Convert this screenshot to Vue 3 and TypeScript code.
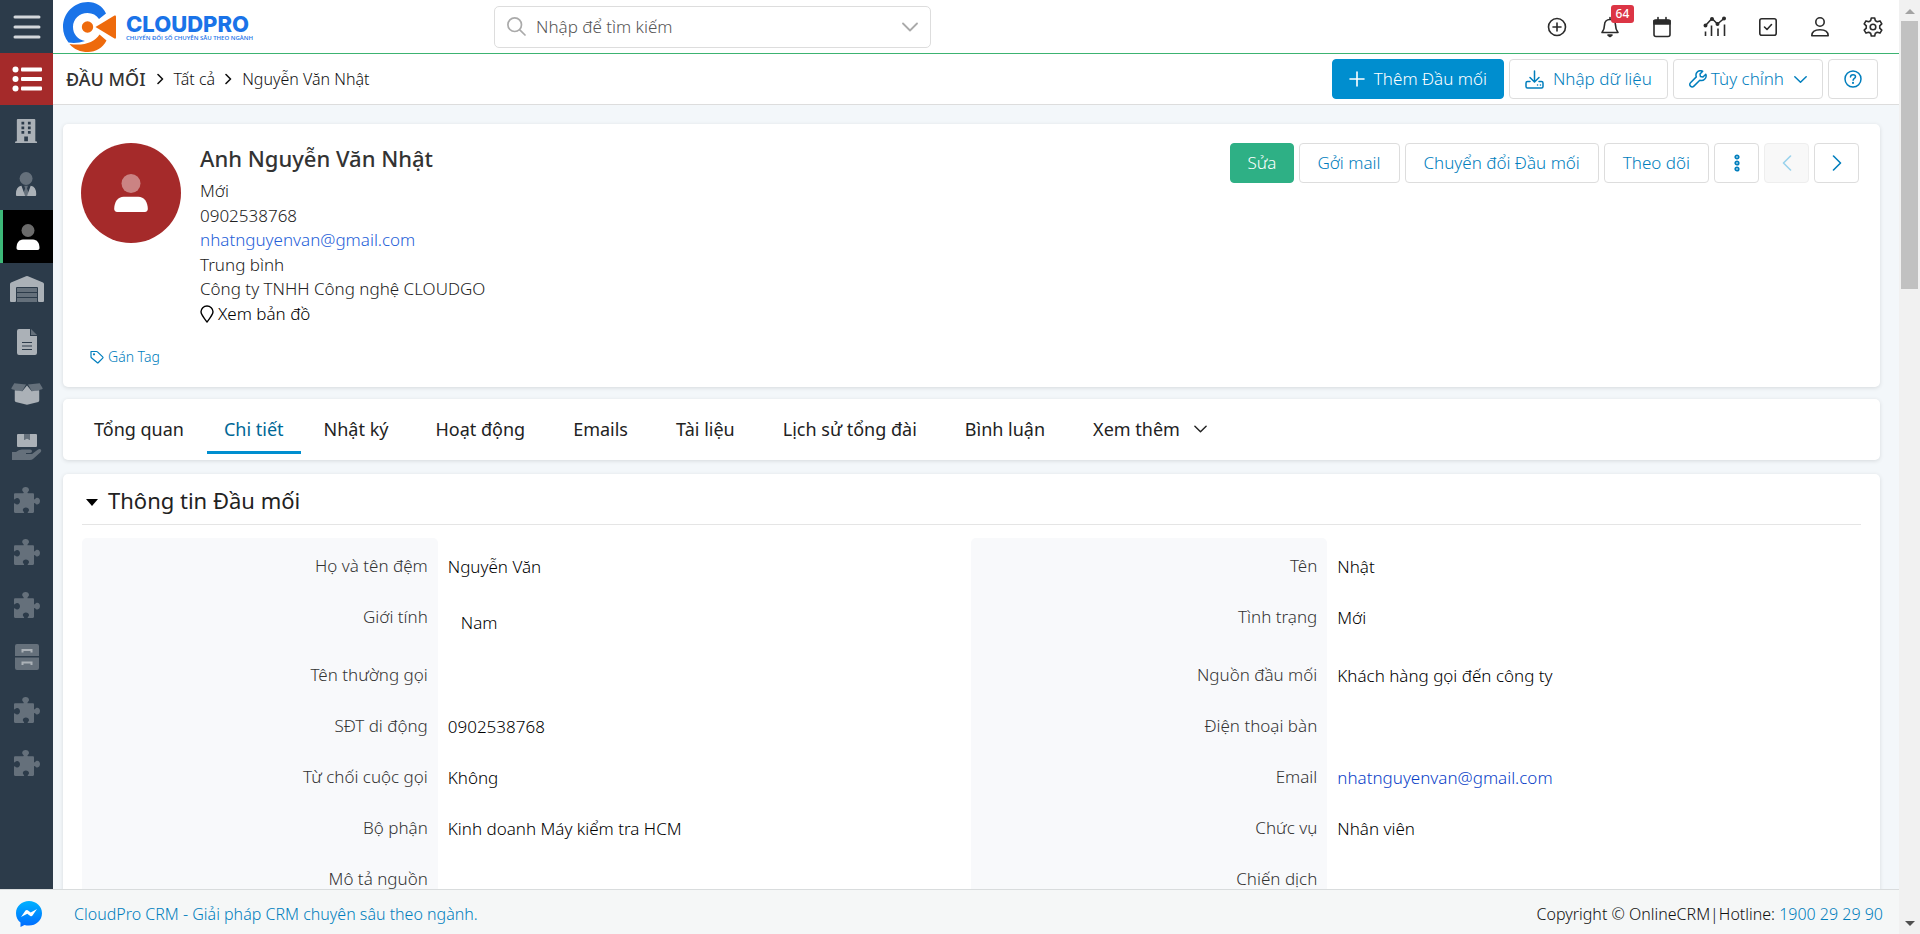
<script setup lang="ts">
interface Field { label: string; value?: string; email?: boolean; boxed?: boolean }

const modules = [
  { id: 'building', name: 'Công ty' },
  { id: 'usertie', name: 'Người liên hệ' },
  { id: 'user', name: 'Đầu mối', active: true },
  { id: 'warehouse', name: 'Kho' },
  { id: 'file', name: 'Báo giá' },
  { id: 'box', name: 'Sản phẩm' },
  { id: 'hand', name: 'Giao hàng' },
  { id: 'puzzle', name: 'Tiện ích 1' },
  { id: 'puzzle', name: 'Tiện ích 2' },
  { id: 'puzzle', name: 'Tiện ích 3' },
  { id: 'cabinet', name: 'Lưu trữ' },
  { id: 'puzzle', name: 'Tiện ích 4' },
  { id: 'puzzle', name: 'Tiện ích 5' },
]

const mainTabs = ['Tổng quan', 'Chi tiết', 'Nhật ký']
const relatedTabs = ['Hoạt động', 'Emails', 'Tài liệu', 'Lịch sử tổng đài', 'Bình luận']

const rows: [Field, Field][] = [
  [{ label: 'Họ và tên đệm', value: 'Nguyễn Văn' }, { label: 'Tên', value: 'Nhật' }],
  [{ label: 'Giới tính', value: 'Nam', boxed: true }, { label: 'Tình trạng', value: 'Mới' }],
  [{ label: 'Tên thường gọi' }, { label: 'Nguồn đầu mối', value: 'Khách hàng gọi đến công ty' }],
  [{ label: 'SĐT di động', value: '0902538768' }, { label: 'Điện thoại bàn' }],
  [{ label: 'Từ chối cuộc gọi', value: 'Không' }, { label: 'Email', value: 'nhatnguyenvan@gmail.com', email: true }],
  [{ label: 'Bộ phận', value: 'Kinh doanh Máy kiểm tra HCM' }, { label: 'Chức vụ', value: 'Nhân viên' }],
  [{ label: 'Mô tả nguồn' }, { label: 'Chiến dịch' }],
]
</script>

<template>
  <div class="shell">
    <svg class="sprite" aria-hidden="true">
      <symbol id="i-building" viewBox="0 0 26 26"><path fill-rule="evenodd" d="M3 0h18q1 0 1 1v23h1q1 0 1 2H0q0-2 1-2h1V1q0-1 1-1zM7 3v3h3V3zM14 3v3h3V3zM7 8v3h3V8zM14 8v3h3V8zM7 13v3h3v-3zM14 13v3h3v-3zM10 19v5h4v-5z" /></symbol>
      <symbol id="i-usertie" viewBox="0 0 26 26"><circle cx="12" cy="7" r="7" opacity=".45" /><path opacity=".45" d="M10 15h4l-1 3 2 5-2 3h-2l-2-3 2-5z" /><path d="M7 15 11 26H2q-1 0-1-2 0-8 6-9zM17 15l-4 11h9q1 0 1-2 0-8-6-9z" /></symbol>
      <symbol id="i-user" viewBox="0 0 26 26"><circle cx="13" cy="6.500" r="6.500" opacity=".42" /><path d="M8 15.500h10c4 0 6.500 3.500 6.500 8.500 0 1-.7 2-2 2H3.500c-1.300 0-2-1-2-2 0-5 2.500-8.500 6.500-8.500z" /></symbol>
      <symbol id="i-warehouse" viewBox="0 0 34 26"><path opacity=".45" d="M7 12h20v4H7zM7 17h20v4H7zM7 22h20v4H7z" /><path d="M1 6.500 16 .3q1-.4 2 0L33 6.500q1 .5 1 1.500v17q0 1-1 1h-4q-1 0-1-1V12q0-1-1-1H7q-1 0-1 1v13q0 1-1 1H1q-1 0-1-1V8q0-1 1-1.500z" /></symbol>
      <symbol id="i-file" viewBox="0 0 20 26"><path fill-rule="evenodd" d="M2 0h11v7h7v17q0 2-2 2H2q-2 0-2-2V2q0-2 2-2zM5 13v1h10v-1zM5 16.500v1h10v-1zM5 20v1h10v-1z" /><path opacity=".45" d="m14 0 6 6h-6z" /></symbol>
      <symbol id="i-box" viewBox="0 0 34 24"><path d="M17 3 12 9 4 8v11q0 1 1 1.500l12 3 12-3q1-.5 1-1.500V8l-8 1z" /><path opacity=".45" d="M3.500.5 16 2l-4.500 7.500L1 7Q0 6.500.500 5.500zM30.500.5 18 2l4.500 7.500L33 7q1-.5.500-1.500z" /></symbol>
      <symbol id="i-hand" viewBox="0 0 30 26"><path d="M6 0h6v6l3-1.500L18 6V0h6q1 0 1 1v11q0 1-1 1H6q-1 0-1-1V1q0-1 1-1z" /><path opacity=".45" d="M12 0h6v6l-3-1.500L12 6zM0 18h4q3-3 7-2.500h7q2 0 2 1.700t-2 1.800h-4v1h6l6-4.500q2-1 3 .300.800 1.200-.5 2.500L21 25q-1 1-3 1H0z" /></symbol>
      <symbol id="i-puzzle" viewBox="0 0 26 26"><path opacity=".45" d="M1.200 6.300h8c.6 0 .8-.6.300-1.100C8.700 4.500 8.200 3.800 8.200 2.800 8.200 1.200 9.700 0 11.600 0s3.400 1.200 3.400 2.800c0 1-.5 1.700-1.300 2.400-.5.500-.3 1.100.3 1.100h4.800c.7 0 1.200.5 1.200 1.200v4.300c0 .6.600.8 1.100.3.600-.8 1.300-1.300 2.300-1.300 1.500 0 2.600 1.500 2.600 3.300s-1.100 3.400-2.600 3.400c-1 0-1.700-.5-2.300-1.300-.5-.5-1.100-.3-1.100.3v8.300c0 .7-.5 1.200-1.200 1.200h-4.600c-.6 0-.8-.6-.3-1.100.8-.6 1.100-1.100 1.100-1.900 0-1.400-1.400-2.400-3.100-2.400s-3.100 1-3.100 2.400c0 .8.400 1.300 1.100 1.900.5.500.3 1.100-.3 1.100H1.200C.5 26 0 25.500 0 24.800v-8c0-.6.600-.8 1.100-.3.500.7 1.200 1.100 2.100 1.100 1.600 0 2.800-1.500 2.800-3.300s-1.200-3.300-2.800-3.300c-.9 0-1.600.4-2.100 1.100-.5.500-1.100.3-1.100-.3V7.500c0-.7.5-1.200 1.200-1.200z" /></symbol>
      <symbol id="i-cabinet" viewBox="0 0 24 26"><path opacity=".45" d="M2 0h20q2 0 2 2v10H0V2q0-2 2-2zM0 13.500h24V24q0 2-2 2H2q-2 0-2-2z" /><path d="M6.500 5h11v3.500h-2V7h-7v1.500h-2zM6.500 17.500h11V21h-2v-1.500h-7V21h-2z" /></symbol>
      <symbol id="i-chev-d" viewBox="0 0 16 10"><path d="m1 1.500 7 7 7-7" fill="none" stroke="currentColor" stroke-width="1.800" stroke-linecap="round" stroke-linejoin="round" /></symbol>
      <symbol id="i-chev-r" viewBox="0 0 10 16"><path d="m1.500 1 7 7-7 7" fill="none" stroke="currentColor" stroke-width="1.600" stroke-linecap="round" stroke-linejoin="round" /></symbol>
      <symbol id="i-crumb" viewBox="0 0 7 12"><path d="m1 1.500 4.500 4.500L1 10.500" fill="none" stroke="currentColor" stroke-width="1.600" stroke-linecap="round" stroke-linejoin="round" /></symbol>
    </svg>

    <aside class="sidebar">
      <button class="burger" aria-label="Menu"><svg width="28" height="24" viewBox="0 0 28 24"><path d="M2 2h24M2 12h24M2 22h24" stroke="#d3d7db" stroke-width="3" stroke-linecap="round" /></svg></button>
      <a href="#" class="current" aria-label="Danh sách"><svg width="30" height="26" viewBox="0 0 30 26" fill="#fff"><circle cx="3.500" cy="3.500" r="3" /><circle cx="3.500" cy="13" r="3" /><circle cx="3.500" cy="22.500" r="3" /><rect x="9" y="1.500" width="21" height="4" rx="1" /><rect x="9" y="11" width="21" height="4" rx="1" /><rect x="9" y="20.500" width="21" height="4" rx="1" /></svg></a>
      <nav class="modules">
        <a v-for="(m, i) in modules" :key="i" href="#" :class="['module', { active: m.active }]" :aria-label="m.name">
          <svg :class="['mi', 'mi-' + m.id]"><use :href="'#i-' + m.id" /></svg>
        </a>
      </nav>
    </aside>

    <header class="topbar">
      <a href="#" class="logo" aria-label="CloudPro">
        <svg width="54" height="52" viewBox="0 0 54 52">
          <path fill="#1a73e8" d="M43 12.500C39.500 5 33 1 25 1 11 1 0 12 0 26c0 6 2 11 5.500 15.500 5 .8 11 .5 16.500-1.500C14.500 38.500 10 33 10 26c0-8 6.500-14 14.500-14 5 0 9 2 11.500 6z" />
          <path fill="#ee6a0c" d="M6.500 43C11 48.500 17.500 51 25 51c8 0 14.500-4 18.500-11.500L36.500 33.500C31.500 41.500 21 45 6.500 43z" />
          <circle cx="24.500" cy="26" r="5.700" fill="#ee6a0c" />
          <path fill="#ee6a0c" d="M32.500 26 51.500 14.500q1.500-.5 1.500 1v21q0 1.500-1.500 1z" />
        </svg>
        <span class="brand"><strong>CLOUDPRO</strong><small>CHUYỂN ĐỔI SỐ CHUYÊN SÂU THEO NGÀNH</small></span>
      </a>
      <label class="search">
        <svg width="19" height="19" viewBox="0 0 19 19" fill="none" stroke="#aaa" stroke-width="1.700" stroke-linecap="round"><circle cx="7.700" cy="7.700" r="6.800" /><path d="m12.800 12.800 5.200 5.200" /></svg>
        <input type="text" placeholder="Nhập để tìm kiếm" aria-label="Tìm kiếm" />
        <svg class="search-chev" width="16" height="10"><use href="#i-chev-d" /></svg>
      </label>
      <div class="tools">
        <button aria-label="Tạo nhanh"><svg width="22" height="22" viewBox="0 0 22 22"><circle cx="11" cy="11" r="8.500" /><path d="M11 7v8M7 11h8" /></svg></button>
        <button aria-label="Thông báo"><svg width="22" height="22" viewBox="0 0 22 22"><path d="M11 1.500v2M11 3.500c-3.500 0-5.500 2.500-5.500 5.500 0 4-1 5.500-2.500 7.500h16c-1.500-2-2.500-3.500-2.500-7.500 0-3-2-5.500-5.500-5.500z" /><path d="M9 19h4l-2 1.500z" fill="currentColor" /></svg><span class="badge">64</span></button>
        <button aria-label="Lịch"><svg width="22" height="22" viewBox="0 0 22 22"><rect x="3" y="4" width="16" height="16.500" rx="2" /><path d="M3 4.500h16V8H3z" fill="currentColor" /><path d="M7 1.500V4M15 1.500V4" /></svg></button>
        <button aria-label="Báo cáo"><svg width="24" height="22" viewBox="0 0 24 22"><path d="M2.500 9.500 9 2.500l5.500 5.500L21.500 2" /><path d="M2.500 15.500V20M8.500 9.500V20M15 12.500V20M21.500 8.500V20" stroke-linecap="butt" /><circle cx="2.500" cy="9.500" r="1.200" fill="currentColor" /><circle cx="9" cy="3" r="1.200" fill="currentColor" /><circle cx="14.500" cy="8" r="1.200" fill="currentColor" /><circle cx="21" cy="2.500" r="1.200" fill="currentColor" /></svg></button>
        <button aria-label="Công việc"><svg width="22" height="22" viewBox="0 0 22 22"><rect x="2.800" y="2.800" width="16.400" height="16.400" rx="2" /><path d="m7.500 11 2.500 2.500 4.500-5" /></svg></button>
        <button aria-label="Tài khoản"><svg width="22" height="22" viewBox="0 0 22 22"><circle cx="11" cy="6" r="4.200" /><path d="M2.800 19.800c0-3.500 2.700-6 8.200-6s8.200 2.500 8.200 6z" /></svg></button>
        <button aria-label="Cài đặt"><svg width="22" height="22" viewBox="0 0 22 22"><circle cx="11" cy="11" r="2.800" /><path d="M9.300 2h3.400l.6 2.700q1.200.4 2 1.100l2.700-.9 1.800 3-2.100 1.900q.2 1.200 0 2.400l2.100 1.900-1.800 3-2.700-.9q-.8.700-2 1.100L12.700 20H9.300l-.6-2.700q-1.200-.4-2-1.100l-2.700.9-1.800-3 2.100-1.900q-.2-1.200 0-2.400L2.200 7.900l1.800-3 2.700.9q.8-.7 2-1.100z" /></svg></button>
      </div>
    </header>

    <div class="crumbs">
      <nav class="path" aria-label="Breadcrumb">
        <a href="#" class="root">ĐẦU MỐI</a><svg width="7" height="12"><use href="#i-crumb" /></svg>
        <a href="#">Tất cả</a><svg width="7" height="12"><use href="#i-crumb" /></svg>
        <span>Nguyễn Văn Nhật</span>
      </nav>
      <div class="btns">
        <button class="btn primary"><svg width="16" height="16" viewBox="0 0 16 16" fill="none" stroke="#fff" stroke-width="1.600" stroke-linecap="round"><path d="M8 1v14M1 8h14" /></svg>Thêm Đầu mối</button>
        <button class="btn"><svg width="19" height="19" viewBox="0 0 19 19" fill="none" stroke="currentColor" stroke-width="1.500" stroke-linecap="round" stroke-linejoin="round"><path d="M9.500 1v10.500M5 7.500l4.500 4.500L14 7.500M5 11.500H2.500q-1.500 0-1.500 1.500v3.500q0 1.500 1.500 1.500h14q1.500 0 1.500-1.500V13q0-1.500-1.500-1.500H14" /><path d="M12.500 15h.1M15.400 15h.1" /></svg>Nhập dữ liệu</button>
        <button class="btn tight"><svg width="18" height="18" viewBox="0 0 18 18" fill="none" stroke="currentColor" stroke-width="1.500" stroke-linejoin="round"><path d="M16.800 4.300 14 7l-2.600-.5L11 4l2.700-2.800C11.500.3 9.500.7 8.200 2.100 6.900 3.400 6.700 5.200 7.300 6.900L1.500 12.700c-1 1-1 2.500 0 3.400 1 1 2.400 1 3.400 0l5.900-5.800c1.800.6 3.500.3 4.800-1 1.400-1.300 1.900-3.200 1.200-5z" /></svg>Tùy chỉnh<svg class="caret" width="13" height="9"><use href="#i-chev-d" /></svg></button>
        <button class="btn" aria-label="Trợ giúp"><svg width="18" height="18" viewBox="0 0 18 18" fill="none" stroke="currentColor" stroke-width="1.500" stroke-linecap="round"><circle cx="9" cy="9" r="8" /><path d="M6.500 7c0-1.500 1-2.300 2.500-2.300s2.500.8 2.500 2.100c0 1.600-2.400 1.600-2.400 3.400" /><path d="M9 12.800v.2" stroke-width="2" /></svg></button>
      </div>
    </div>

    <main class="content">
      <section class="card profile">
        <div class="avatar"><svg class="mi-user-lg"><use href="#i-user" /></svg></div>
        <div class="info">
          <h1>Anh Nguyễn Văn Nhật</h1>
          <div class="lines">
            <span>Mới</span>
            <span>0902538768</span>
            <a href="#" class="mail">nhatnguyenvan@gmail.com</a>
            <span>Trung bình</span>
            <span>Công ty TNHH Công nghệ CLOUDGO</span>
            <a href="#" class="map"><svg width="14" height="18" viewBox="0 0 14 18" fill="none" stroke="currentColor" stroke-width="1.400" stroke-linejoin="round"><path d="M7 17C3.500 12.500 1 9.500 1 6.800 1 3.500 3.700 1 7 1s6 2.500 6 5.800C13 9.500 10.500 12.500 7 17z" /></svg>Xem bản đồ</a>
          </div>
        </div>
        <div class="btns">
          <button class="btn success">Sửa</button>
          <button class="btn">Gởi mail</button>
          <button class="btn">Chuyển đổi Đầu mối</button>
          <button class="btn">Theo dõi</button>
          <button class="btn icon" aria-label="Thêm thao tác"><svg width="6" height="18" viewBox="0 0 6 18" fill="none" stroke="currentColor" stroke-width="1.800"><circle cx="3" cy="3" r="1.700" /><circle cx="3" cy="9" r="1.700" /><circle cx="3" cy="15" r="1.700" /></svg></button>
          <button class="btn icon" disabled aria-label="Trước"><svg class="flip" width="10" height="16"><use href="#i-chev-r" /></svg></button>
          <button class="btn icon" aria-label="Sau"><svg width="10" height="16"><use href="#i-chev-r" /></svg></button>
        </div>
        <a href="#" class="tag"><svg width="14" height="14" viewBox="0 0 14 14" fill="none" stroke="currentColor" stroke-width="1.200" stroke-linejoin="round"><path d="M1 1.500h5.500q.5 0 1 .4l5.200 5q.7.600 0 1.300l-4.300 4.300q-.7.700-1.300 0L1.400 7.800Q1 7.300 1 6.800z" /><circle cx="4" cy="4.300" r=".5" /></svg>Gán Tag</a>
      </section>

      <nav class="card tabs">
        <a v-for="t in mainTabs" :key="t" href="#" :class="['tab', { on: t === 'Chi tiết' }]">{{ t }}</a>
        <a v-for="t in relatedTabs" :key="t" href="#" class="tab related">{{ t }}</a>
        <button class="tab related more">Xem thêm<svg width="13" height="8"><use href="#i-chev-d" /></svg></button>
      </nav>

      <section class="card details">
        <h2><button class="toggle" aria-label="Thu gọn"></button>Thông tin Đầu mối</h2>
        <table>
          <tbody>
            <tr v-for="(row, r) in rows" :key="r">
              <template v-for="f in row" :key="f.label">
                <th scope="row">{{ f.label }}</th>
                <td :class="{ boxed: f.boxed }"><a v-if="f.email" href="#" class="mail">{{ f.value }}</a><template v-else>{{ f.value }}</template></td>
              </template>
            </tr>
          </tbody>
        </table>
      </section>
    </main>

    <footer class="footer">
      <a href="#" class="messenger" aria-label="Messenger"><svg width="26" height="26" viewBox="0 0 26 26"><defs><linearGradient id="mg" x1="0" y1="0" x2="0" y2="1"><stop offset="0" stop-color="#00b2ff" /><stop offset="1" stop-color="#006aff" /></linearGradient></defs><path fill="url(#mg)" d="M13 0C20 0 26 5 26 12.200S20 24.500 13 24.500c-2 0-3-.3-4.500-.6L4.500 26V21.500C1.500 19.500 0 16 0 12.200 0 5 6 0 13 0z" /><path fill="#fff" d="m5 16 4.500-6.500q1-1 2.200-.3l3 2.200L21 8l-4.500 6.600q-1 1.200-2.200.3l-3-2.200z" /></svg></a>
      <a href="#">CloudPro CRM - Giải pháp CRM chuyên sâu theo ngành.</a>
      <p>Copyright © OnlineCRM|Hotline: <a href="#">1900 29 29 90</a></p>
    </footer>

    <div class="scroll" aria-hidden="true"><i class="up"></i><i class="thumb"></i><i class="down"></i></div>
  </div>
</template>

<style>
html, body { margin: 0; }
</style>

<style scoped>
* { box-sizing: border-box; }
.shell {
  display: grid;
  grid-template: 54px 51px minmax(0, 1fr) 45px / 53px minmax(0, 1fr) 21px;
  height: 100vh;
  overflow: hidden;
  background: #f3f7fa;
  color: #333;
  font: 300 17px/24px "Noto Sans", "Open Sans", sans-serif;
}
.sprite { position: absolute; width: 0; height: 0; }
a { color: inherit; text-decoration: none; }
button { font: inherit; color: inherit; background: none; border: 0; padding: 0; cursor: pointer; }
svg { flex: none; display: block; }

.sidebar { grid-area: 1 / 1 / 4 / 2; background: #2c3b4a; display: flex; flex-direction: column; }
.burger, .current { display: flex; align-items: center; justify-content: center; height: 53px; flex: none; }
.current { height: 52px; background: #a52a2a; }
.burger { width: 100%; }
.modules { display: grid; grid-auto-rows: 1fr; height: 684px; flex: none; }
.module { display: flex; align-items: center; justify-content: center; color: #abb1b7; }
.module.active { background: #000; color: #fff; border-left: 3px solid #3cb878; }
.mi { width: 26px; height: 26px; fill: currentColor; }
.mi-building, .mi-cabinet, .mi-usertie { width: 24px; }
.mi-warehouse { width: 34px; }
.mi-box { width: 32px; }
.mi-hand { width: 30px; }

.topbar { grid-area: 1 / 2; background: #fff; border-bottom: 1px solid #3cb371; display: flex; align-items: center; padding-left: 10px; }
.logo { display: flex; align-items: center; gap: 9px; width: 431px; color: #1a73e8; }
.brand { display: flex; flex-direction: column; padding-top: 3px; }
.brand strong { font: 800 22px/20px Inter, sans-serif; }
.brand small { font: 600 6px/8px "Open Sans", sans-serif; white-space: nowrap; }
.search { display: flex; align-items: center; width: 437px; height: 42px; border: 1px solid #ddd; border-radius: 5px; padding: 0 12px; gap: 10px; }
.search input { flex: 1; min-width: 0; border: 0; outline: 0; background: none; padding: 0; font: inherit; color: #333; }
.search input::placeholder { color: #555; opacity: 1; }
.search-chev { color: #aaa; }
.tools { display: grid; grid-template-columns: repeat(7, 1fr); width: 368px; margin-left: auto; color: #2b2b2b; }
.tools button { display: flex; justify-content: center; position: relative; }
.tools svg { fill: none; stroke: currentColor; stroke-width: 1.6; stroke-linejoin: round; stroke-linecap: round; }
.badge { position: absolute; left: 27px; top: -11px; padding: 0 5px; background: #dc3545; color: #fff; border-radius: 3px; font-size: 12px; line-height: 18px; font-weight: 500; }

.crumbs { grid-area: 2 / 2; background: #fff; border-bottom: 1px solid #ddd; display: flex; align-items: center; justify-content: space-between; padding: 0 21px 0 13px; }
.path { display: flex; align-items: center; gap: 10px; font-size: 16px; color: #111; }
.root { font-size: 18px; font-weight: 500; color: #333; margin-right: 1px; }
.btns { display: flex; gap: 5px; }
.btn { display: flex; align-items: center; gap: 9px; height: 40px; padding: 0 15px; border: 1px solid #ddd; border-radius: 4px; background: #fff; color: #007ebd; white-space: nowrap; }
.btn.primary { padding: 0 16px; background: #008ecf; border-color: #008ecf; color: #fff; }
.btn.tight { gap: 4px; }
.profile .btn { padding: 0 18px; }
.profile .btn.success { padding: 0 16px; background: #2eb085; border-color: #2eb085; color: #fff; }
.profile .btn.icon { width: 45px; justify-content: center; padding: 0; }
.btn:disabled { background: #f8f8f8; border-color: #eee; color: #99d2ec; }
.caret { margin-left: 6px; }
.flip { transform: scaleX(-1); }

.content { grid-area: 3 / 2; overflow: hidden; padding: 19px 19px 0 10px; }
.card { background: #fff; border-radius: 5px; box-shadow: 0 1px 4px rgba(0, 0, 0, .12); }
.profile { display: grid; grid-template-columns: 100px minmax(0, 1fr) auto; column-gap: 19px; padding: 19px 21px 18px 18px; margin-bottom: 12px; }
.avatar { width: 100px; height: 100px; border-radius: 50%; background: #a52a2a; display: flex; align-items: center; justify-content: center; color: #fff; }
.mi-user-lg { width: 38px; height: 38px; fill: currentColor; }
.info h1 { margin: 0; font-size: 22px; line-height: 30px; font-weight: 500; }
.lines { display: grid; grid-auto-rows: 1fr; height: 147px; margin-top: 6px; color: #222; }
.mail { color: #0a3fc8; }
.lines .mail { color: #2560d8; }
.map { display: flex; gap: 4px; align-items: center; color: #000; }
.tag { grid-column: 1 / -1; display: flex; align-items: center; gap: 4px; margin: 19px 0 0 9px; font-size: 14px; line-height: 24px; color: #007ebd; }
.profile .btns { align-self: start; }

.tabs { display: flex; padding: 8px 14px 6px; margin-bottom: 14px; height: 61px; }
.tab { padding: 0 17px; margin-right: 6px; line-height: 44px; border-bottom: 3px solid transparent; font-size: 18px; font-weight: 400; color: #222; white-space: nowrap; }
.tab.on { color: #006796; border-color: #008ecf; }
.tab.related { padding: 0 16px; margin: 0 8px; }
.tab.more { display: flex; align-items: center; gap: 14px; }

.details { padding: 0 19px; }
.details h2 { display: flex; align-items: center; gap: 10px; margin: 0 0 13px; padding: 2px 0 0 4px; border-bottom: 1px solid #e5e5e5; height: 51px; font-size: 22px; font-weight: 400; color: #222; }
.toggle { border: 6px solid transparent; border-top: 7px solid #000; border-bottom: 0; margin-top: 4px; }
table { width: 100%; border-spacing: 0; table-layout: fixed; }
th, td { height: 51px; padding: 16px 10px 10px; vertical-align: top; text-align: left; font-weight: 300; }
th { width: 20%; text-align: right; color: #333; background: #f8f9fb; }
td { width: 30%; color: #000; padding-top: 17px; }
tr:first-child th { border-radius: 5px 5px 0 0; }
td.boxed { padding: 22px 23px 12px; }

.footer { grid-area: 4 / 1 / 5 / 3; background: #f5f7f7; border-top: 1px solid #d9dcdd; display: flex; align-items: center; padding: 3px 16px 0; font-size: 16px; color: #111; }
.footer a { color: #007ebd; }
.footer p { margin: 0 0 0 auto; }
.messenger { margin-right: 32px; }

.scroll { grid-area: 1 / 3 / 5 / 4; background: #f1f1f1; display: flex; flex-direction: column; align-items: center; }
.up, .down { border: 5px solid transparent; }
.up { border-bottom-color: #a3a3a3; margin: 4px 0 7px; }
.down { border-top-color: #505050; margin-top: auto; margin-bottom: 3px; }
.thumb { width: 17px; height: 268px; background: #c1c1c1; }
</style>
